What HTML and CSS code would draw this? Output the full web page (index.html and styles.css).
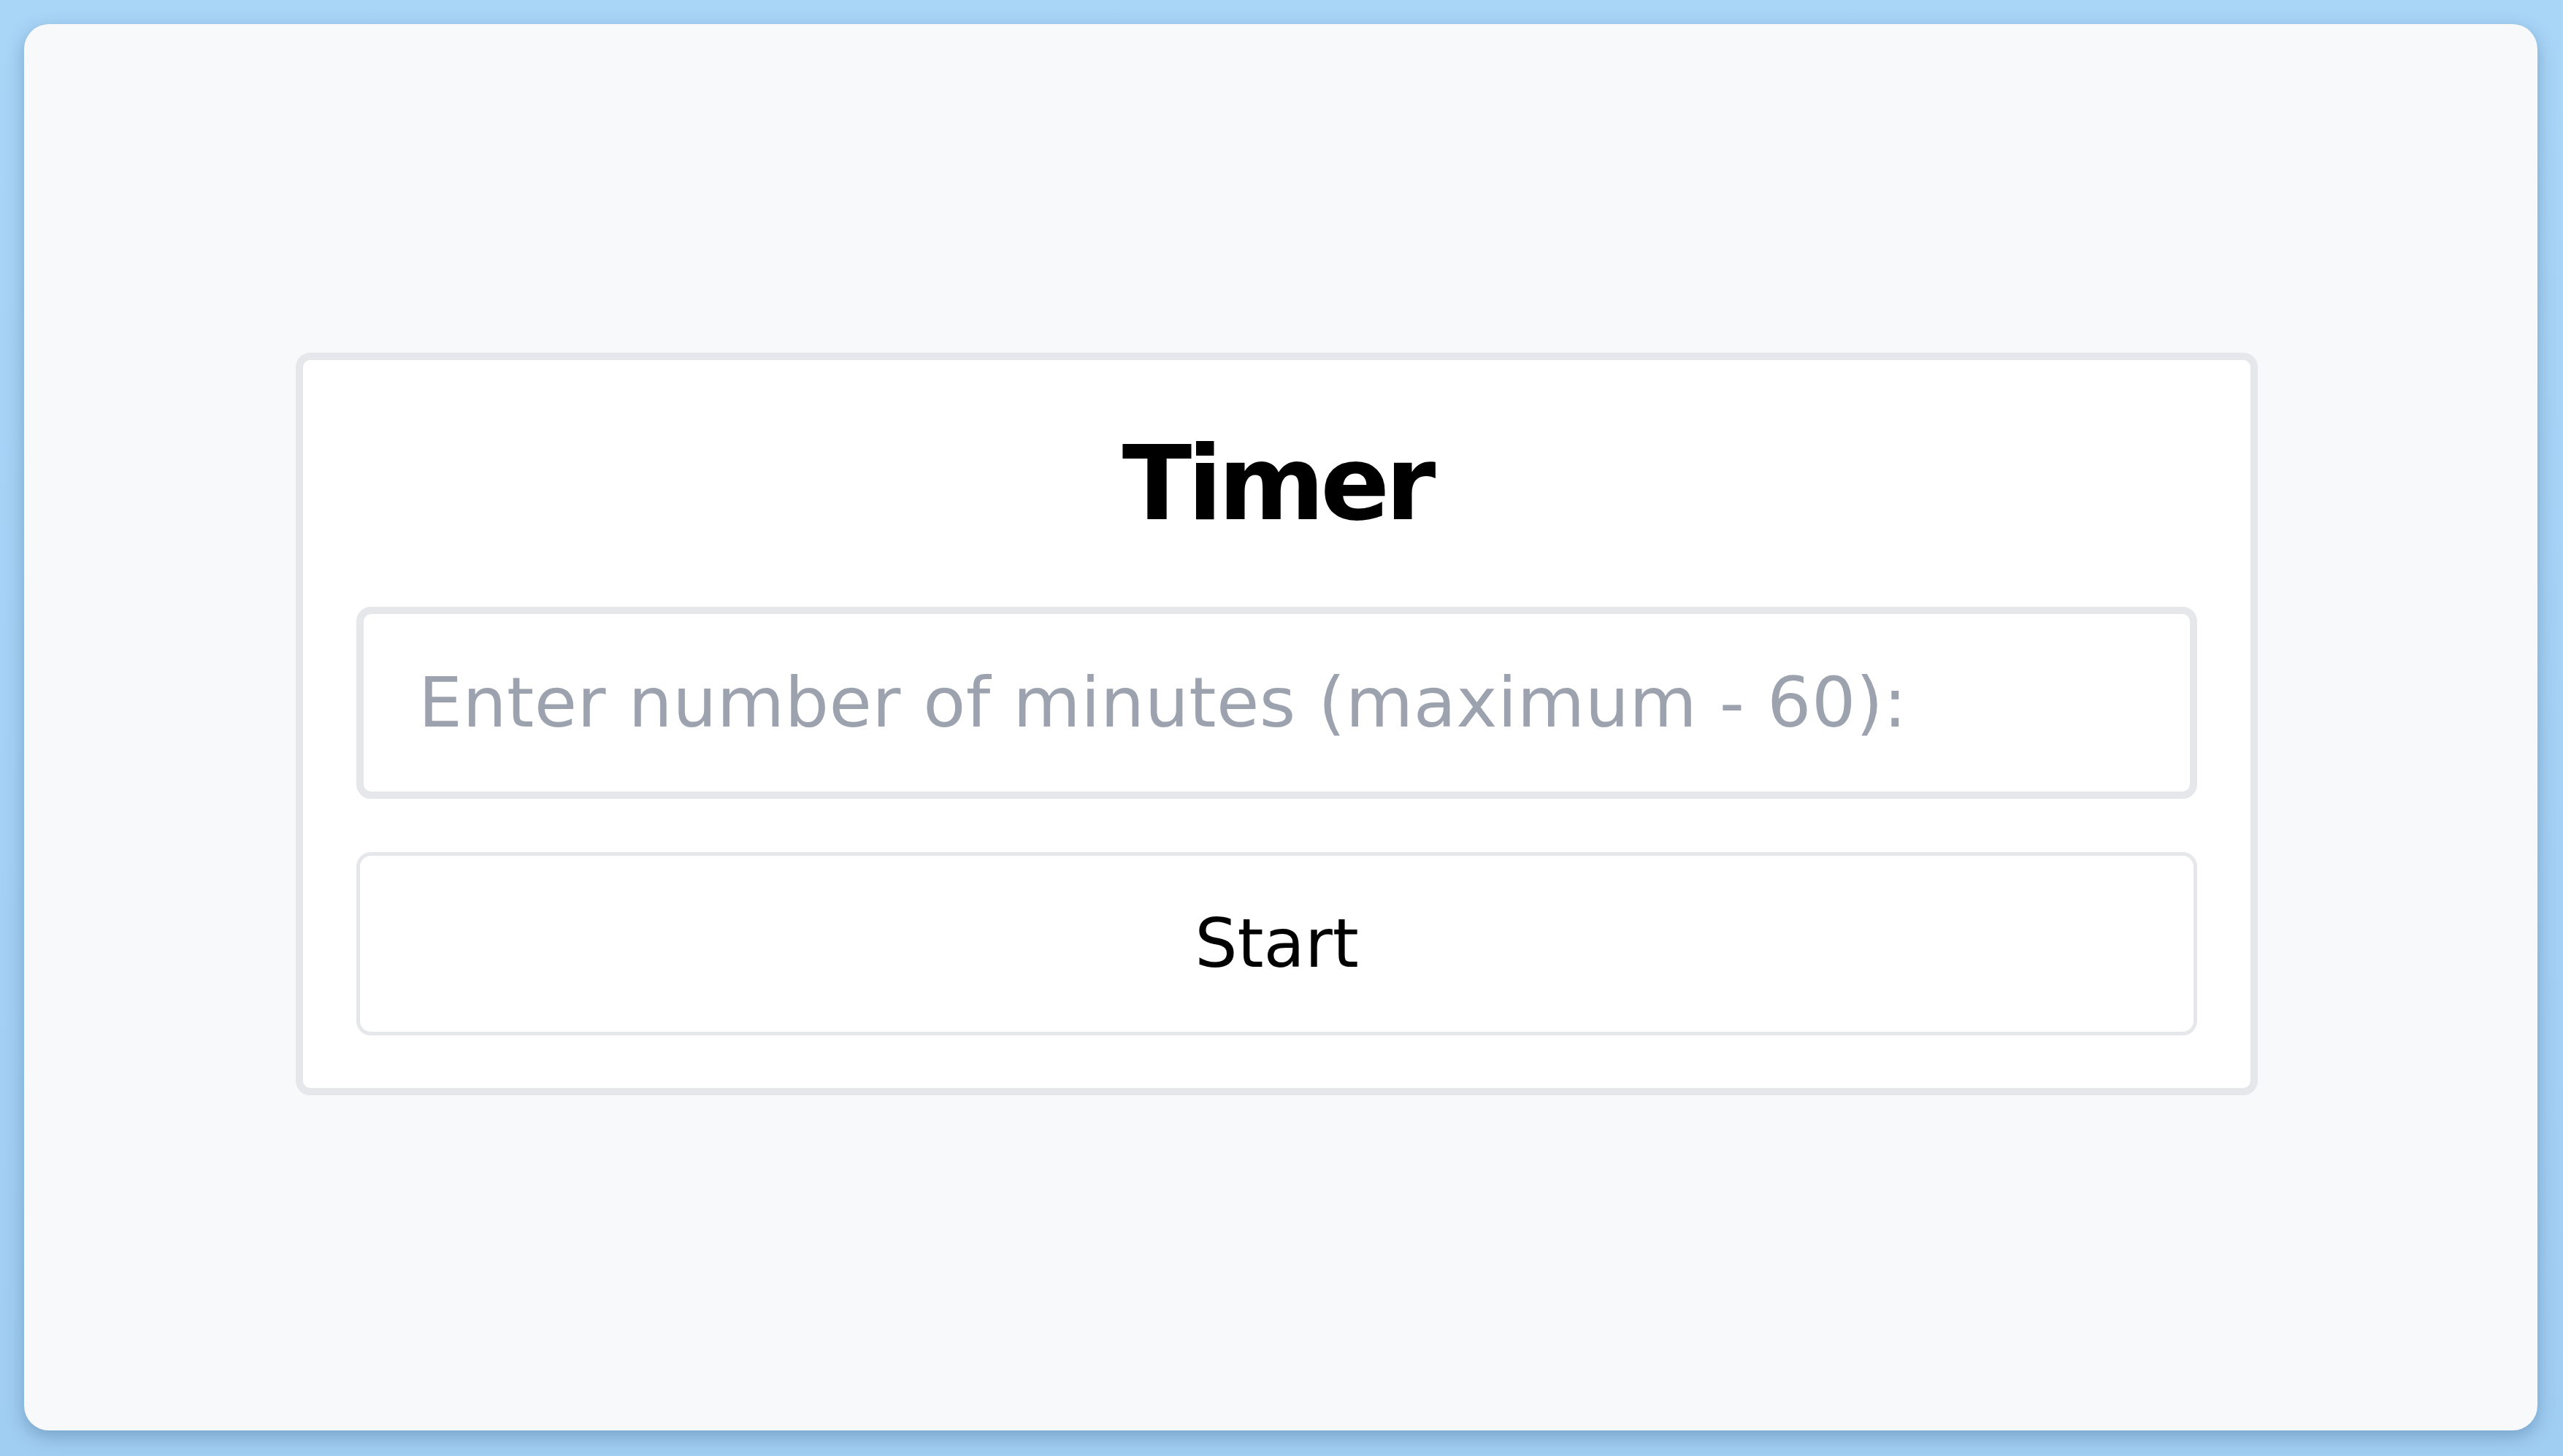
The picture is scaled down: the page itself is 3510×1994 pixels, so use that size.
FILE: index.html
```html
<!DOCTYPE html>
<html lang="en">
<head>
<meta charset="utf-8">
<title>Timer</title>
<link rel="stylesheet" href="styles.css">
</head>
<body>
  <main class="window">
    <section class="timer-box">
      <h1 class="title">Timer</h1>
      <input class="minutes" type="text" placeholder="Enter number of minutes (maximum - 60):">
      <button class="start" type="button">Start</button>
    </section>
  </main>
</body>
</html>
```

FILE: styles.css
```css
html, body {
  margin: 0;
  height: 100%;
}

body {
  background: linear-gradient(180deg, #a9d5f7 0%, #a0cdf2 100%);
  padding: 33px 35px 35px 33px;
  box-sizing: border-box;
  font-family: "DejaVu Sans", "Noto Sans", sans-serif;
}

.window {
  height: 100%;
  background: #f8f9fb;
  border-radius: 34px;
  box-shadow: 0 8px 24px rgba(40, 80, 120, 0.35);
  display: flex;
  align-items: center;
  justify-content: center;
}

.timer-box {
  width: 2687px;
  box-sizing: border-box;
  background: #ffffff;
  border: 10px solid #e5e7eb;
  border-radius: 20px;
  padding: 72px 73px;
  display: flex;
  flex-direction: column;
  margin: 0 0 10px -11px;
}

.title {
  margin: 0 0 70px;
  text-align: center;
  font-size: 140px;
  line-height: 1.4;
  font-weight: 700;
  color: #000;
  letter-spacing: -6px;
}

.minutes {
  height: 263px;
  box-sizing: border-box;
  border: 10px solid #e5e7eb;
  border-radius: 20px;
  padding: 0 75px;
  font-family: inherit;
  font-size: 95px;
  letter-spacing: 0.4px;
  color: #111;
  background: #fff;
  outline: none;
  margin: 0 0 73px;
}

.minutes::placeholder {
  color: #9ca3af;
}

.start {
  height: 251px;
  box-sizing: border-box;
  border: 5px solid #e5e7eb;
  border-radius: 20px;
  background: #fff;
  font-family: inherit;
  font-size: 92px;
  color: #000;
  cursor: pointer;
}
```
